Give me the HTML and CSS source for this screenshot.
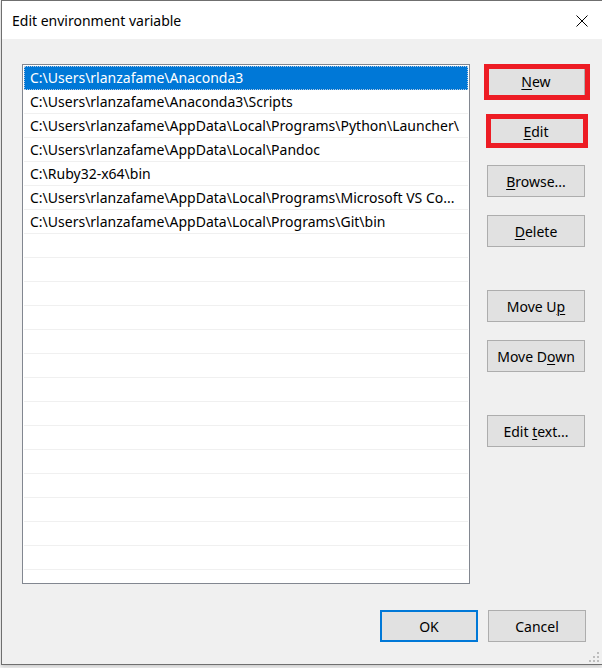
FILE: index.html
```html
<!DOCTYPE html>
<html>
<head>
<meta charset="utf-8">
<link rel="stylesheet" href="styles.css">
</head>
<body>
<div class="window">
  <div class="titlebar">
    <span class="title">Edit environment variable</span>
    <svg class="close" width="12" height="12" viewBox="0 0 12 12"><path d="M0.5 0.5 L11.5 11.5 M11.5 0.5 L0.5 11.5" stroke="#000" stroke-width="1" fill="none"/></svg>
  </div>
  <div class="content">
    <div class="main">
      <div class="list">
        <div class="row selected"><span>C:\Users\rlanzafame\Anaconda3</span></div>
        <div class="row"><span>C:\Users\rlanzafame\Anaconda3\Scripts</span></div>
        <div class="row"><span>C:\Users\rlanzafame\AppData\Local\Programs\Python\Launcher\</span></div>
        <div class="row"><span>C:\Users\rlanzafame\AppData\Local\Pandoc</span></div>
        <div class="row"><span>C:\Ruby32-x64\bin</span></div>
        <div class="row"><span>C:\Users\rlanzafame\AppData\Local\Programs\Microsoft VS Co...</span></div>
        <div class="row"><span>C:\Users\rlanzafame\AppData\Local\Programs\Git\bin</span></div>
        <div class="row"></div><div class="row"></div><div class="row"></div>
        <div class="row"></div><div class="row"></div><div class="row"></div>
        <div class="row"></div><div class="row"></div><div class="row"></div>
        <div class="row"></div><div class="row"></div><div class="row"></div>
        <div class="row"></div><div class="row"></div><div class="row"></div>
      </div>
      <div class="actions">
        <div class="group">
          <button class="btn"><u>N</u>ew<span class="mark mark-new"></span></button>
          <button class="btn"><u>E</u>dit<span class="mark mark-edit"></span></button>
          <button class="btn"><u>B</u>rowse...</button>
          <button class="btn"><u>D</u>elete</button>
        </div>
        <div class="group">
          <button class="btn">Move U<u>p</u></button>
          <button class="btn">Move D<u>o</u>wn</button>
        </div>
        <div class="group">
          <button class="btn">Edit <u>t</u>ext...</button>
        </div>
      </div>
    </div>
    <div class="footer">
      <button class="btn default">OK</button>
      <button class="btn">Cancel</button>
    </div>
    <svg class="grip" width="12" height="12" viewBox="0 0 12 12" fill="#bdbdbd">
      <rect x="9" y="1" width="2" height="2"/>
      <rect x="5" y="5" width="2" height="2"/><rect x="9" y="5" width="2" height="2"/>
      <rect x="1" y="9" width="2" height="2"/><rect x="5" y="9" width="2" height="2"/><rect x="9" y="9" width="2" height="2"/>
    </svg>
  </div>
</div>
</body>
</html>
```
FILE: styles.css
```css
html, body {
  margin: 0;
  padding: 0;
}
body {
  background: #f6f6f6;
  width: 602px;
  height: 668px;
  overflow: hidden;
  font-family: "Segoe UI", "Noto Sans", "Open Sans", sans-serif;
  font-size: 14px;
  color: #000;
}
.window {
  margin-left: 1px;
  width: 601px;
  height: 665px;
  box-sizing: border-box;
  border: 1px solid #6f6f6f;
  border-right: none;
  background: #f0f0f0;
  display: flex;
  flex-direction: column;
  box-shadow: 0 2px 4px rgba(0,0,0,0.18);
}
.titlebar {
  height: 38px;
  background: #fff;
  display: flex;
  align-items: center;
  justify-content: space-between;
  padding: 0 14px 0 10px;
  flex: none;
}
.title {
  font-size: 14px;
}
.close {
  display: block;
  margin-top: 1px;
}
.content {
  flex: 1;
  position: relative;
  padding: 25px 16px 0 20px;
  display: flex;
  flex-direction: column;
}
.main {
  display: flex;
  gap: 17px;
}
.list {
  width: 448px;
  height: 520px;
  box-sizing: border-box;
  border: 1px solid #828790;
  background: #fff;
  padding: 1px;
  overflow: hidden;
  flex: none;
}
.row {
  height: 24px;
  box-sizing: border-box;
  border-bottom: 1px solid #f0f0f0;
  padding-left: 6px;
  display: flex;
  align-items: center;
  white-space: nowrap;
  overflow: hidden;
}
.row.selected {
  background: #0078d7;
  color: #fff;
  border-bottom-color: #0078d7;
  outline: 1px dotted #b5c9e0;
  outline-offset: -1px;
}
.actions {
  display: flex;
  flex-direction: column;
  gap: 43px;
  padding-top: 1px;
}
.group {
  display: flex;
  flex-direction: column;
  gap: 18px;
}
.btn {
  position: relative;
  width: 98px;
  height: 32px;
  box-sizing: border-box;
  background: #e1e1e1;
  border: 1px solid #adadad;
  border-radius: 0;
  font-family: inherit;
  font-size: 14px;
  color: #000;
  padding: 0;
  margin: 0;
}
.btn u {
  text-decoration-thickness: 1px;
  text-underline-offset: 2px;
}
.mark {
  position: absolute;
  border: 5px solid #ed1c24;
  box-sizing: border-box;
  pointer-events: none;
}
.mark-new {
  left: -4px;
  top: -2px;
  width: 106px;
  height: 36px;
}
.mark-edit {
  left: -2px;
  top: -2px;
  width: 102px;
  height: 34px;
}
.footer {
  display: flex;
  justify-content: flex-end;
  gap: 10px;
  margin-top: 26px;
}
.btn.default {
  border: 2px solid #0078d7;
}
.grip {
  position: absolute;
  right: 2px;
  bottom: 1px;
}
```
